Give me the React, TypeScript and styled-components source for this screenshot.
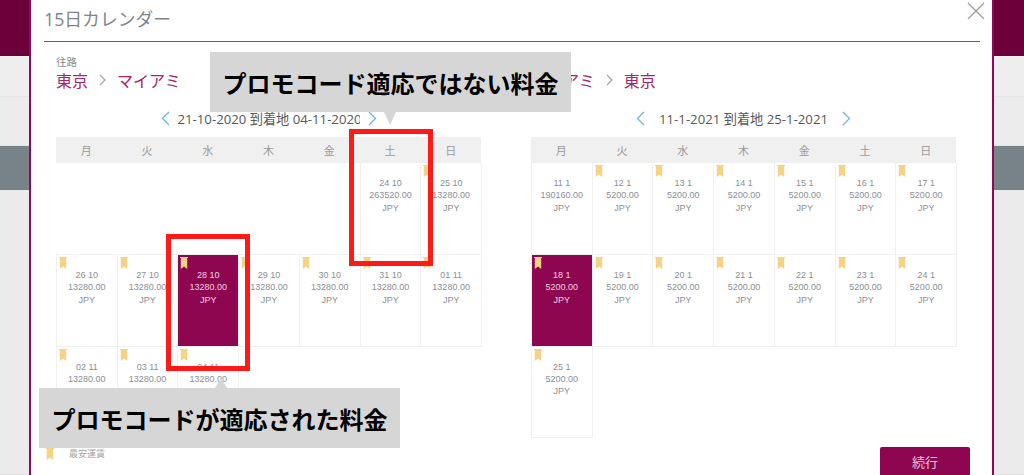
import React from "react";
import styled, { createGlobalStyle } from "styled-components";

const GlobalStyle = createGlobalStyle`
  html, body {
    margin: 0;
    padding: 0;
    background: #ececec;
    font-family: "Open Sans", "Noto Sans CJK JP", sans-serif;
  }
`;

const Page = styled.div`
  position: relative;
  display: flex;
  width: 1024px;
  height: 475px;
  overflow: hidden;
`;

const Strip = styled.div`
  flex: 0 0 ${(p: { $width: number }) => p.$width}px;
  display: flex;
  flex-direction: column;
`;

const Band = styled.div<{ $height: number; $color: string }>`
  flex: none;
  box-sizing: border-box;
  height: ${(p) => p.$height}px;
  background: ${(p) => p.$color};
  border-bottom: 1px solid rgba(0, 0, 0, 0.03);
`;

const Modal = styled.div`
  flex: 0 0 965px;
  box-sizing: border-box;
  height: 475px;
  overflow: hidden;
  background: #ffffff;
  border-left: 2px solid #8e0a52;
  border-right: 2px solid #8e0a52;
  display: flex;
  flex-direction: column;
`;

const TitleBar = styled.div`
  flex: none;
  position: relative;
  height: 41px;
  margin: 0 12px 0 13px;
  border-bottom: 1px solid #93436f;
  display: flex;
  align-items: center;
`;

const Title = styled.div`
  font-size: 17.8px;
  color: #7f8487;
  margin-top: -6px;
`;

const CloseIcon = styled.svg`
  position: absolute;
  right: -5px;
  top: 2px;
  width: 18px;
  height: 18px;
  stroke: #9a9a9a;
  stroke-width: 1.2;
  fill: none;
`;

const Panels = styled.div`
  flex: none;
  display: flex;
  gap: 50px;
  padding: 13px 0 0 25px;
`;

const Panel = styled.div`
  width: 425px;
  display: flex;
  flex-direction: column;
`;

const Direction = styled.div`
  font-size: 10.5px;
  line-height: 14px;
  color: #8a8a8a;
`;

const Route = styled.div`
  display: flex;
  align-items: center;
  gap: 11px;
  height: 22px;
  font-size: 16px;
  color: #a3266c;
`;

const RouteArrow = styled.svg`
  width: 7px;
  height: 12px;
  stroke: #a0a0a0;
  stroke-width: 1.1;
  fill: none;
`;

const DateNav = styled.div`
  width: 216px;
  height: 22px;
  margin: 16px auto 8px;
  display: flex;
  align-items: center;
  justify-content: space-between;
`;

const Chevron = styled.svg`
  width: 9px;
  height: 15px;
  stroke: #6db6e0;
  stroke-width: 1.3;
  fill: none;
`;

const DateLabel = styled.div`
  max-width: 182px;
  overflow: hidden;
  white-space: nowrap;
  font-size: 13.2px;
  color: #55595c;
`;

const Weekdays = styled.div`
  display: grid;
  grid-template-columns: repeat(7, 1fr);
  height: 26px;
  background: #f0f0f0;
`;

const Weekday = styled.div`
  display: flex;
  align-items: center;
  justify-content: center;
  font-size: 11px;
  color: #9a9a9a;
`;

const DayGrid = styled.div`
  display: grid;
  grid-template-columns: repeat(7, 1fr);
  grid-auto-rows: 91.8px;
`;

const BlankCell = styled.div`
  border-bottom: 1px solid #f0f0f0;
`;

const DayCell = styled.div<{ $selected?: boolean }>`
  position: relative;
  box-sizing: border-box;
  margin-right: -1px;
  padding-top: 14px;
  border: 1px solid #f0f0f0;
  border-top: none;
  background: ${(p) => (p.$selected ? "#8f0650" : "transparent")};
  color: ${(p) => (p.$selected ? "#f0d3e2" : "#8b9095")};
  font-family: "Liberation Sans", Arial, sans-serif;
  font-size: 9px;
  line-height: 12.4px;
  text-align: center;
`;

const RibbonIcon = styled.svg`
  display: block;
  width: 8px;
  height: 12px;
  fill: #f5d284;
`;

const CellRibbon = styled.div`
  position: absolute;
  top: 2px;
  left: 2px;
`;

const Footer = styled.div`
  flex: none;
  display: flex;
  align-items: flex-start;
  justify-content: space-between;
  margin-top: 9px;
  padding: 0 22px 0 15px;
`;

const Legend = styled.div`
  display: flex;
  align-items: center;
  gap: 15px;
  font-size: 9px;
  color: #a5a5a5;
`;

const ContinueButton = styled.button`
  width: 90px;
  height: 34px;
  border: none;
  border-radius: 2px;
  background: #8f0650;
  color: #e9c4d9;
  font-family: inherit;
  font-size: 13px;
  padding: 0 0 6px;
`;

const Callout = styled.div<{ $left: number; $top: number; $arrow: "up" | "down"; $arrowLeft: number }>`
  position: absolute;
  left: ${(p) => p.$left}px;
  top: ${(p) => p.$top}px;
  width: 361px;
  height: 60px;
  display: flex;
  align-items: center;
  justify-content: center;
  background: #d6d6d6;
  color: #000000;
  font-family: "Noto Sans CJK JP", sans-serif;
  font-weight: 700;
  font-size: 24px;
  white-space: nowrap;

  &:after {
    content: "";
    position: absolute;
    left: ${(p) => p.$arrowLeft}px;
    ${(p) => (p.$arrow === "down" ? "top: 100%;" : "bottom: 100%;")}
    border-left: 6px solid transparent;
    border-right: 6px solid transparent;
    ${(p) =>
      p.$arrow === "down"
        ? "border-top: 13px solid #d6d6d6;"
        : "border-bottom: 10px solid #d6d6d6;"}
  }
`;

const Highlight = styled.div<{ $left: number; $top: number }>`
  position: absolute;
  left: ${(p) => p.$left}px;
  top: ${(p) => p.$top}px;
  width: 84px;
  height: 137px;
  box-sizing: border-box;
  border: 5px solid #ff1a1a;
`;

const Ribbon = () => (
  <RibbonIcon viewBox="0 0 8 12">
    <path d="M0 0H8V1H7.2V12L4 9.6L0.8 12V1H0Z" />
  </RibbonIcon>
);

type Day = { date: string; price: string; cheapest?: boolean; selected?: boolean };

type CalendarProps = {
  direction: string;
  from: string;
  to: string;
  range: string;
  blanks: number;
  days: Day[];
};

const WEEKDAYS = ["月", "火", "水", "木", "金", "土", "日"];

const Calendar = ({ direction, from, to, range, blanks, days }: CalendarProps) => (
  <Panel>
    <Direction>{direction}</Direction>
    <Route>
      <span>{from}</span>
      <RouteArrow viewBox="0 0 7 12">
        <path d="M1 1L6 6L1 11" />
      </RouteArrow>
      <span>{to}</span>
    </Route>
    <DateNav>
      <Chevron viewBox="0 0 9 15">
        <path d="M8 1L1.5 7.5L8 14" />
      </Chevron>
      <DateLabel>{range}</DateLabel>
      <Chevron viewBox="0 0 9 15">
        <path d="M1 1L7.5 7.5L1 14" />
      </Chevron>
    </DateNav>
    <Weekdays>
      {WEEKDAYS.map((d) => (
        <Weekday key={d}>{d}</Weekday>
      ))}
    </Weekdays>
    <DayGrid>
      {Array.from({ length: blanks }).map((_, i) => (
        <BlankCell key={i} />
      ))}
      {days.map((d) => (
        <DayCell key={d.date} $selected={d.selected}>
          {d.cheapest && (
            <CellRibbon>
              <Ribbon />
            </CellRibbon>
          )}
          {d.date}
          <br />
          {d.price}
          <br />
          JPY
        </DayCell>
      ))}
    </DayGrid>
  </Panel>
);

const outbound: Day[] = [
  { date: "24 10", price: "263520.00" },
  ...["25 10", "26 10", "27 10", "28 10", "29 10", "30 10", "31 10", "01 11", "02 11", "03 11", "04 11"].map(
    (date) => ({ date, price: "13280.00", cheapest: true, selected: date === "28 10" })
  ),
];

const inbound: Day[] = [
  { date: "11 1", price: "190160.00" },
  ...["12 1", "13 1", "14 1", "15 1", "16 1", "17 1", "18 1", "19 1", "20 1", "21 1", "22 1", "23 1", "24 1", "25 1"].map(
    (date) => ({ date, price: "5200.00", cheapest: true, selected: date === "18 1" })
  ),
];

const App = () => {
  return (
    <Page>
      <GlobalStyle />
      <Strip $width={29}>
        <Band $height={56} $color="#6b003b" />
        <Band $height={41} $color="#eeeeee" />
        <Band $height={49} $color="#ececec" />
        <Band $height={44} $color="#788389" />
        <Band $height={285} $color="#ebebeb" />
      </Strip>
      <Modal>
        <TitleBar>
          <Title>15日カレンダー</Title>
          <CloseIcon viewBox="0 0 18 18">
            <path d="M1 1L17 17M17 1L1 17" />
          </CloseIcon>
        </TitleBar>
        <Panels>
          <Calendar
            direction="往路"
            from="東京"
            to="マイアミ"
            range="21-10-2020 到着地 04-11-2020"
            blanks={5}
            days={outbound}
          />
          <Calendar
            direction="復路"
            from="マイアミ"
            to="東京"
            range="11-1-2021 到着地 25-1-2021"
            blanks={0}
            days={inbound}
          />
        </Panels>
        <Footer>
          <Legend>
            <Ribbon />
            最安運賃
          </Legend>
          <ContinueButton>続行</ContinueButton>
        </Footer>
      </Modal>
      <Strip $width={30}>
        <Band $height={56} $color="#6b003b" />
        <Band $height={41} $color="#eeeeee" />
        <Band $height={49} $color="#ececec" />
        <Band $height={44} $color="#788389" />
        <Band $height={285} $color="#ebebeb" />
      </Strip>
      <Highlight $left={349} $top={129} />
      <Highlight $left={166} $top={234} />
      <Callout $left={210} $top={52} $arrow="down" $arrowLeft={174}>
        プロモコード適応ではない料金
      </Callout>
      <Callout $left={39} $top={388} $arrow="up" $arrowLeft={176}>
        プロモコードが適応された料金
      </Callout>
    </Page>
  );
};

export default App;
